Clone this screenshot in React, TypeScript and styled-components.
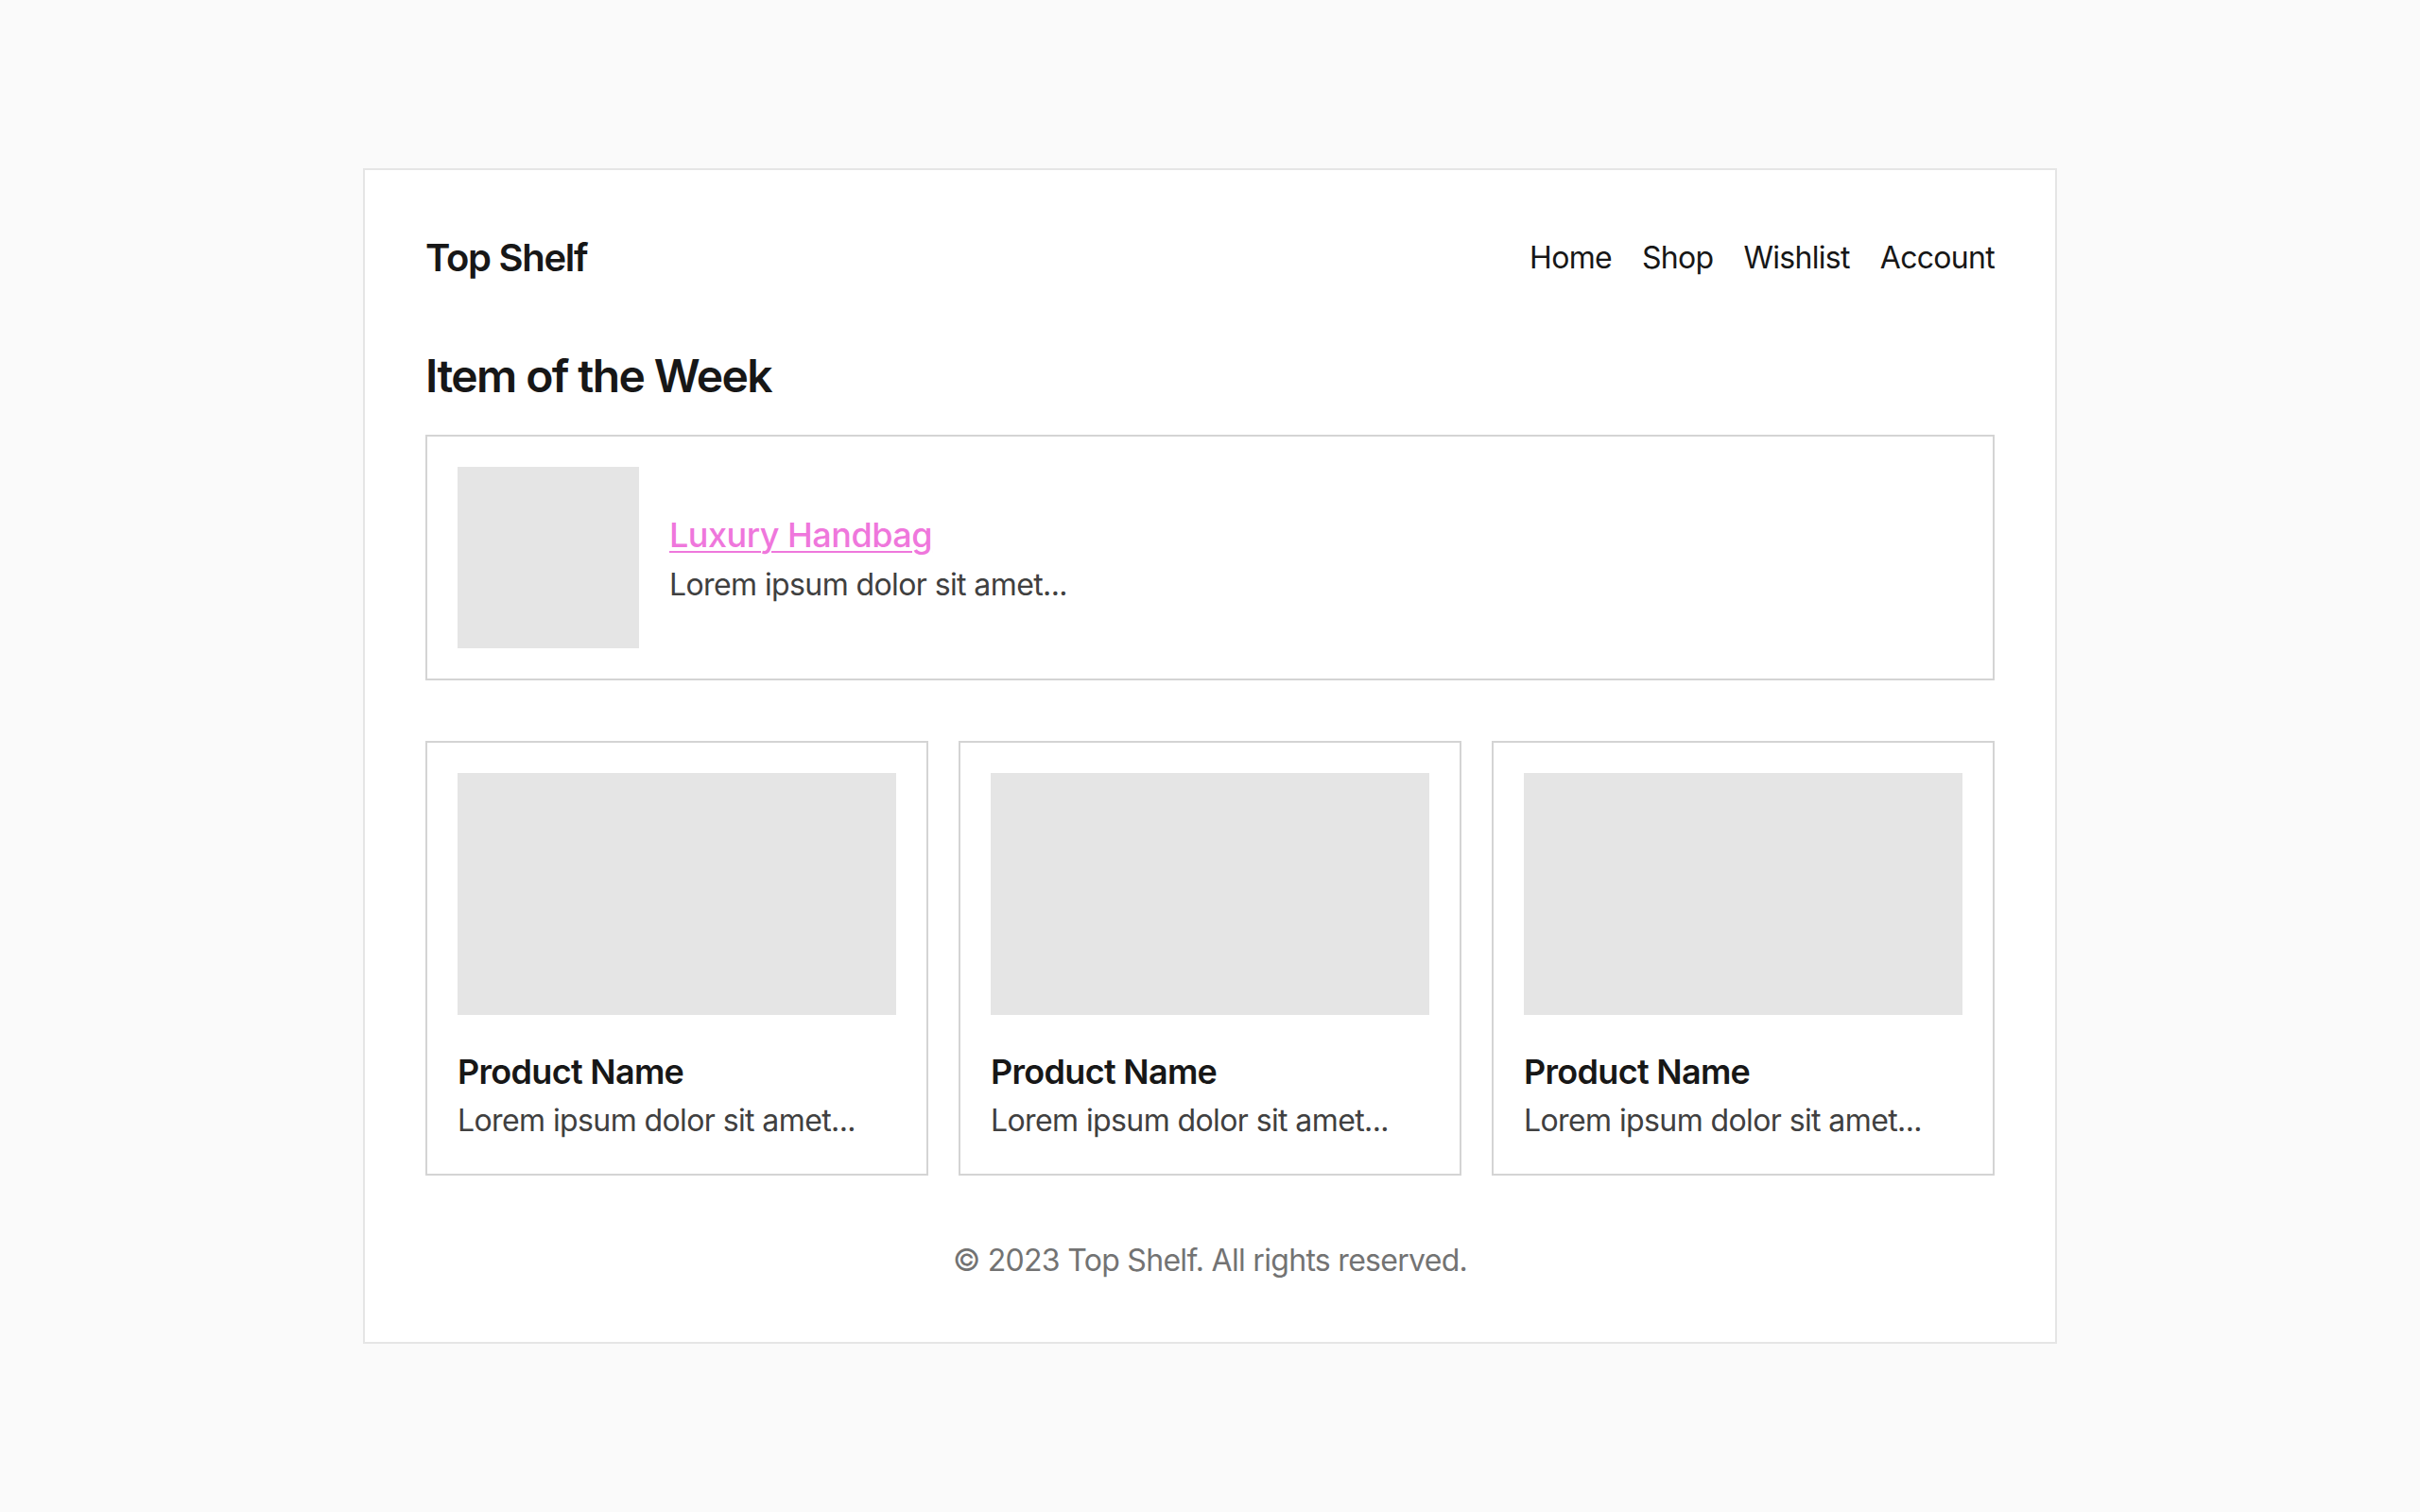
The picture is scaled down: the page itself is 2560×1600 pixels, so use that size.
import React from "react";
import styled, { createGlobalStyle } from "styled-components";

const GlobalStyle = createGlobalStyle`
  html, body { margin: 0; padding: 0; }
  body {
    background: #fafafa;
    font-family: Inter, "Noto Sans", "Liberation Sans", sans-serif;
    color: #171717;
  }
  * { box-sizing: border-box; }
`;

const Page = styled.div`
  min-height: 100vh;
  display: flex;
  align-items: center;
  justify-content: center;
`;

const Container = styled.div`
  width: 1792px;
  background: #ffffff;
  border: 2px solid #e5e5e5;
  padding: 64px;
  display: flex;
  flex-direction: column;
`;

const Header = styled.header`
  display: flex;
  align-items: center;
  justify-content: space-between;
  height: 56px;
  padding-top: 2px;
`;

const Logo = styled.div`
  font-size: 40px;
  line-height: 56px;
  font-weight: 600;
  color: #171717;
  letter-spacing: -1.3px;
`;

const Nav = styled.nav`
  display: flex;
  gap: 32px;
`;

const NavLink = styled.a`
  font-size: 32px;
  line-height: 48px;
  color: #171717;
  text-decoration: none;
  letter-spacing: -0.7px;
`;

const SectionTitle = styled.h2`
  margin: 64px 0 32px;
  padding-top: 2px;
  height: 64px;
  font-size: 48px;
  line-height: 64px;
  font-weight: 600;
  color: #171717;
  letter-spacing: -1.6px;
`;

const Featured = styled.div`
  border: 2px solid #d4d4d4;
  padding: 32px;
  display: flex;
  align-items: center;
  gap: 32px;
`;

const Placeholder = styled.div<{ $w?: string; $h: number }>`
  width: ${(p) => p.$w ?? "100%"};
  height: ${(p) => p.$h}px;
  background: #e5e5e5;
  flex-shrink: 0;
`;

const FeaturedText = styled.div`
  display: flex;
  flex-direction: column;
  padding-top: 2px;
`;

const FeaturedLink = styled.a`
  font-size: 36px;
  line-height: 54px;
  font-weight: 500;
  color: #ef77dc;
  text-decoration: underline;
  text-underline-offset: 4px;
  text-decoration-thickness: 2px;
  margin-bottom: 2px;
  letter-spacing: -0.5px;
`;

const Description = styled.p`
  margin: 0;
  font-size: 32px;
  line-height: 48px;
  color: #404040;
  letter-spacing: -0.6px;
`;

const Grid = styled.div`
  margin-top: 64px;
  display: grid;
  grid-template-columns: repeat(3, 1fr);
  gap: 32px;
`;

const Card = styled.div`
  border: 2px solid #d4d4d4;
  padding: 32px;
  display: flex;
  flex-direction: column;
`;

const ProductName = styled.h3`
  margin: 33px 0 1px;
  font-size: 36px;
  line-height: 54px;
  font-weight: 600;
  color: #171717;
  letter-spacing: -0.7px;
`;

const Footer = styled.footer`
  margin-top: 66px;
  margin-bottom: -2px;
  text-align: center;
  font-size: 32px;
  line-height: 48px;
  color: #737373;
  letter-spacing: -0.7px;
`;

const products = [1, 2, 3];

export default function App() {
  return (
    <>
      <GlobalStyle />
      <Page>
        <Container>
          <Header>
            <Logo>Top Shelf</Logo>
            <Nav>
              <NavLink href="#">Home</NavLink>
              <NavLink href="#">Shop</NavLink>
              <NavLink href="#">Wishlist</NavLink>
              <NavLink href="#">Account</NavLink>
            </Nav>
          </Header>
          <SectionTitle>Item of the Week</SectionTitle>
          <Featured>
            <Placeholder $w="192px" $h={192} />
            <FeaturedText>
              <FeaturedLink href="#">Luxury Handbag</FeaturedLink>
              <Description>Lorem ipsum dolor sit amet...</Description>
            </FeaturedText>
          </Featured>
          <Grid>
            {products.map((p) => (
              <Card key={p}>
                <Placeholder $h={256} />
                <ProductName>Product Name</ProductName>
                <Description>Lorem ipsum dolor sit amet...</Description>
              </Card>
            ))}
          </Grid>
          <Footer>© 2023 Top Shelf. All rights reserved.</Footer>
        </Container>
      </Page>
    </>
  );
}
